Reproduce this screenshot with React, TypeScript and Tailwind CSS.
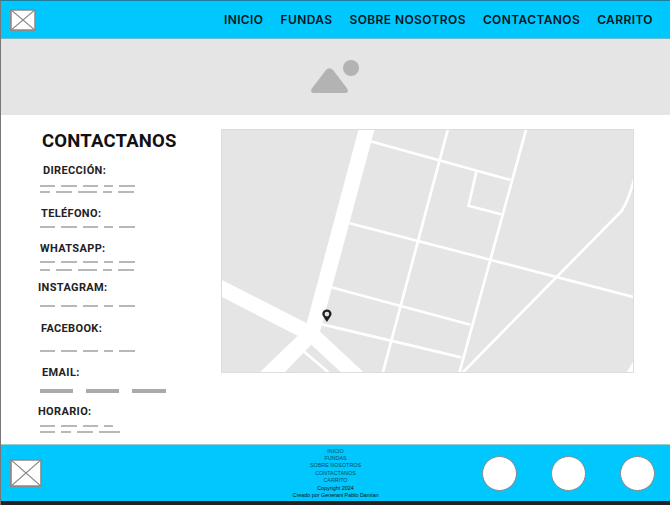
const navItems = ["INICIO", "FUNDAS", "SOBRE NOSOTROS", "CONTACTANOS", "CARRITO"];

const footerLinks = ["INICIO", "FUNDAS", "SOBRE NOSOTROS", "CONTACTANOS", "CARRITO"];

const Dashes = ({ widths, className }: { widths: number[]; className: string }) => (
  <div className={`flex gap-[6px] ml-[39px] ${className}`}>
    {widths.map((w, i) => (
      <div key={i} className="h-[2px] bg-[#b8b8b8]" style={{ width: w }} />
    ))}
  </div>
);

const Label = ({ text, className }: { text: string; className: string }) => (
  <div className={`h-3 pt-[1px] text-[11px] leading-3 font-bold tracking-[0.35px] whitespace-nowrap text-[#222] font-['Roboto',sans-serif] ${className}`}>
    {text}
  </div>
);

const Placeholder = ({ className }: { className: string }) => (
  <svg className={className} viewBox="0 0 100 100" preserveAspectRatio="none">
    <rect x="1" y="1" width="98" height="98" fill="#fff" stroke="#8a8a8a" strokeWidth="3" vectorEffect="non-scaling-stroke" />
    <path d="M0 0L100 100M100 0L0 100" stroke="#8a8a8a" strokeWidth="1.2" vectorEffect="non-scaling-stroke" />
  </svg>
);

const MapDrawing = () => (
  <svg className="w-[413px] h-[244px] block" viewBox="19 14 1240 729">
    <rect x="19" y="14" width="1240" height="729" fill="#e5e5e5" />
    <g fill="#fff">
      <polygon points="432,14 480,14 316,622 275,600" />
      <polygon points="19,464 290,602 316,622 250,634 19,515" />
      <polygon points="250,632 290,600 316,620 448,743 380,743 290,660 210,743 135,743" />
      <polygon points="1259,706 1237,743 1259,743" />
    </g>
    <g fill="none" stroke="#fff" strokeWidth="8">
      <path d="M268 680L342 743" />
      <path d="M470 50L888 165" />
      <path d="M700 14L505 743" />
      <path d="M935 14L735 743" />
      <path d="M786 140L762 243L860 268" />
      <path d="M405 295L1259 517" />
      <path d="M352 488L768 600" />
      <path d="M320 598L740 698" />
      <path d="M1259 165Q1243 225 1222 258L745 743" />
    </g>
    <path
      fillRule="evenodd"
      fill="#222"
      d="M337 592C328 579 323 572 323 568A14 14 0 0 1 351 568C351 572 346 579 337 592ZM337 561A7 7 0 1 0 337 575A7 7 0 1 0 337 561Z"
    />
  </svg>
);

export default function App() {
  return (
    <div className="w-[670px] h-[505px] flex flex-col overflow-hidden bg-white border-l border-t border-l-[#777] border-t-[#1d7f9e]">
      {/* header */}
      <header className="h-[38px] shrink-0 flex items-center justify-between pl-[9px] pr-[17px] bg-[#00c8ff] border-b border-[#6fb6c9]">
        <Placeholder className="w-[26px] h-[22px]" />
        <nav className="flex gap-[17px] text-[12px] font-semibold tracking-[0.4px] text-[#06141c] font-['Inter',sans-serif]">
          {navItems.map((item) => (
            <span key={item}>{item}</span>
          ))}
        </nav>
      </header>

      {/* banner */}
      <div className="h-[76px] shrink-0 flex items-center justify-center bg-[#e5e5e5]">
        <svg className="w-[50px] h-[34px] -ml-[2px]" viewBox="0 0 50 34">
          <path d="M1.5 29L16 10Q19.5 6.5 23 10L37.5 29Q39 33 35 33H4Q0 33 1.5 29Z" fill="#b3b3b3" />
          <circle cx="41" cy="8" r="8" fill="#b3b3b3" />
        </svg>
      </div>

      {/* main */}
      <main className="flex-1 flex">
        <div className="w-[220px] shrink-0 pt-4 flex flex-col">
          <h1 className="h-5 ml-[41px] text-[18.5px] leading-5 font-bold tracking-[0.2px] text-[#111] font-['Roboto',sans-serif]">
            CONTACTANOS
          </h1>
          <Label text="DIRECCIÓN:" className="mt-[13px] ml-[42px]" />
          <Dashes widths={[15, 16, 15, 9, 16]} className="mt-[9px]" />
          <Dashes widths={[10, 16, 19, 9, 16]} className="mt-1" />
          <Label text="TELÉFONO:" className="mt-[14px] ml-[40px]" />
          <Dashes widths={[15, 16, 15, 9, 16]} className="mt-[7px]" />
          <Label text="WHATSAPP:" className="mt-[14px] ml-[39px]" />
          <Dashes widths={[15, 16, 15, 9, 16]} className="mt-[7px]" />
          <Dashes widths={[10, 16, 19, 9, 16]} className="mt-[6px]" />
          <Label text="INSTAGRAM:" className="mt-[10px] ml-[37px]" />
          <Dashes widths={[15, 16, 15, 9, 16]} className="mt-3" />
          <Label text="FACEBOOK:" className="mt-[15px] ml-[40px]" />
          <Dashes widths={[15, 16, 15, 9, 16]} className="mt-4" />
          <Label text="EMAIL:" className="mt-[14px] ml-[41px]" />
          <div className="flex gap-[13px] ml-[39px] mt-[11px]">
            <div className="w-[33px] h-1 bg-[#aaa]" />
            <div className="w-[33px] h-1 bg-[#aaa]" />
            <div className="w-[34px] h-1 bg-[#aaa]" />
          </div>
          <Label text="HORARIO:" className="mt-3 ml-[37px]" />
          <Dashes widths={[15, 16, 15, 9]} className="mt-2" />
          <Dashes widths={[15, 10, 16, 21]} className="mt-1" />
        </div>
        <div className="pt-[14px]">
          <div className="relative">
            <MapDrawing />
            <div className="absolute inset-0 border border-[#ddd]" />
          </div>
        </div>
      </main>

      {/* footer */}
      <footer className="h-[57px] shrink-0 grid grid-cols-[1fr_auto_1fr] items-center bg-[#00c8ff] border-t border-[#9cc]">
        <div className="pl-[9px]">
          <Placeholder className="w-8 h-7" />
        </div>
        <div className="flex flex-col items-center text-[5.4px] leading-[7.4px] pt-[1px] text-[#0d4a60] font-['Liberation_Sans',sans-serif]">
          {footerLinks.map((link) => (
            <span key={link}>{link}</span>
          ))}
          <span className="text-[#111]">Copyright 2024</span>
          <span className="text-[#111]">Creado por Generani Pablo Damian</span>
        </div>
        <div className="flex justify-end gap-[34px] pr-[15px]">
          <div className="w-[35px] h-[35px] rounded-full bg-white border border-[#888]" />
          <div className="w-[35px] h-[35px] rounded-full bg-white border border-[#888]" />
          <div className="w-[35px] h-[35px] rounded-full bg-white border border-[#888]" />
        </div>
      </footer>
      <div className="h-1 shrink-0 bg-[#222]" />
    </div>
  );
}
